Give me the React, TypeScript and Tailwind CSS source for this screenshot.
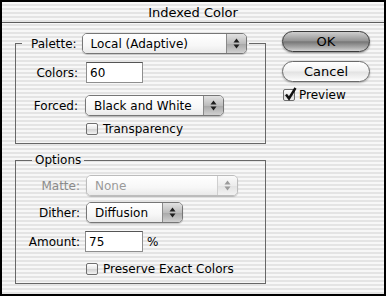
const stripes =
  "bg-[image:repeating-linear-gradient(to_bottom,#f7f7f7_0px,#f7f7f7_2px,#e4e4e4_2px,#e4e4e4_4px)]"

function Arrows({ color }: { color: string }) {
  return (
    <svg width="7" height="11" viewBox="0 0 7 11">
      <polygon points="0.5,4.5 3.5,0.5 6.5,4.5" fill={color} />
      <polygon points="0.5,6.5 3.5,10.5 6.5,6.5" fill={color} />
    </svg>
  )
}

function Popup({ text, w, disabled }: { text: string; w: string; disabled?: boolean }) {
  return (
    <div
      className={`${w} h-[21px] flex rounded-[5px] border shadow-[0_1px_1px_rgba(0,0,0,0.2)] ${
        disabled ? "border-[#bcbcbc]" : "border-[#767676]"
      }`}
    >
      <div
        className={`flex-1 flex items-center pl-[8px] rounded-l-[4px] bg-[linear-gradient(#ffffff,#f7f7f7_60%,#e9e9e9)] ${
          disabled ? "text-[#9a9a9a]" : ""
        }`}
      >
        {text}
      </div>
      <div
        className={`w-[20px] flex items-center justify-center rounded-r-[4px] border-l ${
          disabled
            ? "border-[#cfcfcf] bg-[linear-gradient(#fafafa,#ececec_50%,#e2e2e2_52%,#f2f2f2)]"
            : "border-[#8a8a8a] bg-[linear-gradient(#e2e2e2,#bcbcbc_50%,#a8a8a8_52%,#d0d0d0)]"
        }`}
      >
        <Arrows color={disabled ? "#9a9a9a" : "#1e1e1e"} />
      </div>
    </div>
  )
}

function Field({ value, w }: { value: string; w: string }) {
  return (
    <div className={`${w} h-[21px] flex items-center pl-[3px] bg-white border border-[#8e8e8e] border-t-[#555]`}>
      {value}
    </div>
  )
}

function Check({ checked }: { checked?: boolean }) {
  return (
    <div className="relative w-[12px] h-[12px] rounded-[2px] border border-[#6f6f6f] bg-[linear-gradient(#ffffff,#e6e6e6_50%,#d2d2d2_52%,#f2f2f2)]">
      {checked && (
        <svg className="absolute left-[0px] top-[-3px]" width="13" height="14" viewBox="0 0 13 14">
          <path d="M2 7.5 L5 11.5 L11.5 1" fill="none" stroke="#111" strokeWidth="2.4" />
        </svg>
      )}
    </div>
  )
}

export default function App() {
  return (
    <div className={`w-[386px] h-[296px] border-2 border-black ${stripes} font-['DejaVu_Sans',sans-serif] text-[12px] text-black leading-none`}>
      <div className="h-[20px] flex items-center justify-center text-[13px]">Indexed Color</div>
      <div className="h-px bg-[#5c5c5c]" />

      <div className="flex">
        <div className="ml-[13px]">
          <fieldset className="mt-[10px] w-[251px] border border-[#676767] pb-[7px]">
            <legend className="ml-[6px] pl-[9px] pr-[2px]">
              <div className="flex items-center">
                <span>Palette:</span>
                <div className="ml-[5px]">
                  <Popup text="Local (Adaptive)" w="w-[165px]" />
                </div>
              </div>
            </legend>
            <div className="mt-[8px] flex items-center">
              <span className="w-[62px] text-right">Colors:</span>
              <div className="ml-[8px]">
                <Field value="60" w="w-[57px]" />
              </div>
            </div>
            <div className="mt-[12px] flex items-center">
              <span className="w-[62px] text-right">Forced:</span>
              <div className="ml-[7px]">
                <Popup text="Black and White" w="w-[139px]" />
              </div>
            </div>
            <div className="mt-[6px] h-[14px] flex items-center pl-[70px]">
              <Check />
              <span className="ml-[5px]">Transparency</span>
            </div>
          </fieldset>

          <fieldset className="mt-[9px] w-[251px] border border-[#676767] pb-[7px]">
            <legend className="ml-[16px] px-[3px] leading-[15px]">Options</legend>
            <div className="mt-[7px] flex items-center">
              <span className="w-[64px] text-right text-[#8a8a8a]">Matte:</span>
              <div className="ml-[6px]">
                <Popup text="None" w="w-[152px]" disabled />
              </div>
            </div>
            <div className="mt-[6px] flex items-center">
              <span className="w-[64px] text-right">Dither:</span>
              <div className="ml-[6px]">
                <Popup text="Diffusion" w="w-[97px]" />
              </div>
            </div>
            <div className="mt-[8px] flex items-center">
              <span className="w-[64px] text-right">Amount:</span>
              <div className="ml-[5px]">
                <Field value="75" w="w-[58px]" />
              </div>
              <span className="ml-[4px]">%</span>
            </div>
            <div className="mt-[10px] h-[14px] flex items-center pl-[70px]">
              <Check />
              <span className="ml-[5px]">Preserve Exact Colors</span>
            </div>
          </fieldset>
        </div>

        <div className="ml-[16px] flex flex-col">
          <button className="mt-[8px] w-[88px] h-[21px] rounded-full border border-[#3a3a3a] text-[13px] bg-[linear-gradient(#cfcfcf,#969696_45%,#777777_52%,#a8a8a8_80%,#d2d2d2)] shadow-[0_1px_2px_rgba(0,0,0,0.4)]">
            OK
          </button>
          <button className="mt-[9px] w-[88px] h-[21px] rounded-full border border-[#6a6a6a] text-[13px] bg-[linear-gradient(#ffffff,#f1f1f1_48%,#e2e2e2_52%,#f4f4f4_85%,#ffffff)] shadow-[0_1px_2px_rgba(0,0,0,0.3)]">
            Cancel
          </button>
          <div className="mt-[6px] h-[14px] flex items-center pl-[1px]">
            <Check checked />
            <span className="ml-[4px]">Preview</span>
          </div>
        </div>
      </div>
    </div>
  )
}
